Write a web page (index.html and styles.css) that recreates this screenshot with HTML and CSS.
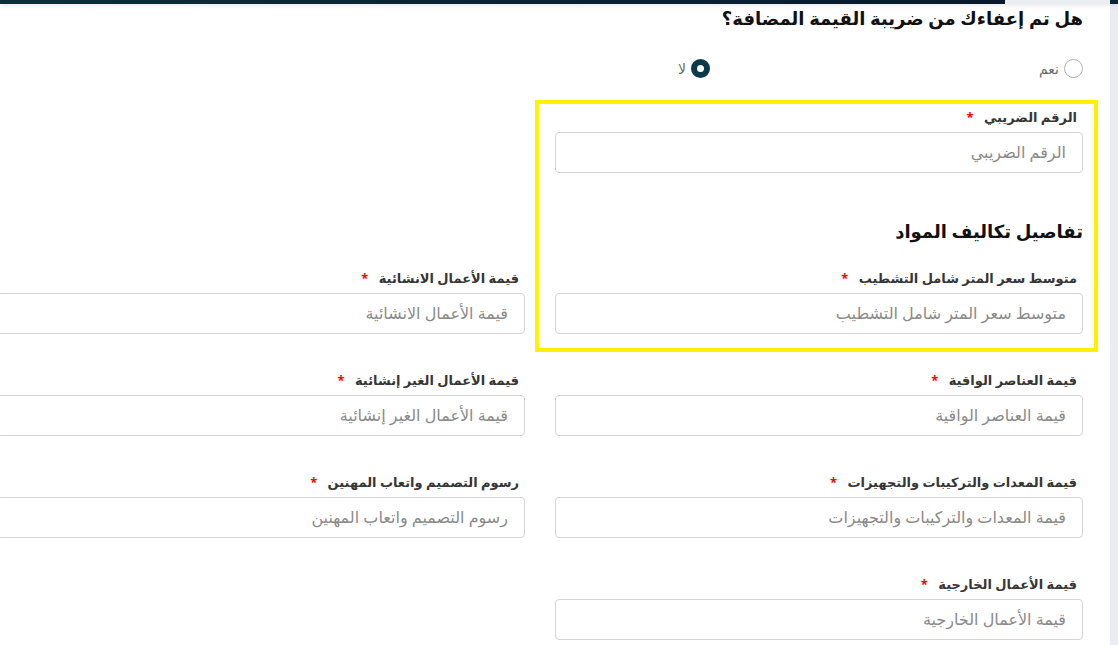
FILE: index.html
```html
<!DOCTYPE html>
<html lang="ar" dir="rtl">
<head>
<meta charset="utf-8">
<title>نموذج</title>
<link rel="stylesheet" href="styles.css">
</head>
<body>
<div class="topbar">
  <span class="bar-fill"></span>
  <span class="bar-rest"></span>
  <span class="bar-end"></span>
</div>
<div class="layout">
  <span class="side-strip"></span>
  <main class="main">
    <h2 class="question">هل تم إعفاءك من ضريبة القيمة المضافة؟</h2>
    <div class="radios">
      <label class="radio-opt"><span class="radio"></span><span class="radio-text">نعم</span></label>
      <label class="radio-opt"><span class="radio checked"></span><span class="radio-text">لا</span></label>
    </div>

    <div class="grid first">
      <div class="field">
        <div class="label">الرقم الضريبي <span class="req">*</span></div>
        <div class="input">الرقم الضريبي</div>
      </div>
    </div>

    <h3 class="section">تفاصيل تكاليف المواد</h3>

    <div class="grid">
      <div class="field">
        <div class="label">متوسط سعر المتر شامل التشطيب <span class="req">*</span></div>
        <div class="input">متوسط سعر المتر شامل التشطيب</div>
      </div>
      <div class="field">
        <div class="label">قيمة الأعمال الانشائية <span class="req">*</span></div>
        <div class="input">قيمة الأعمال الانشائية</div>
      </div>
      <div class="field">
        <div class="label">قيمة العناصر الواقية <span class="req">*</span></div>
        <div class="input">قيمة العناصر الواقية</div>
      </div>
      <div class="field">
        <div class="label">قيمة الأعمال الغير إنشائية <span class="req">*</span></div>
        <div class="input">قيمة الأعمال الغير إنشائية</div>
      </div>
      <div class="field">
        <div class="label">قيمة المعدات والتركيبات والتجهيزات <span class="req">*</span></div>
        <div class="input">قيمة المعدات والتركيبات والتجهيزات</div>
      </div>
      <div class="field">
        <div class="label">رسوم التصميم واتعاب المهنين <span class="req">*</span></div>
        <div class="input">رسوم التصميم واتعاب المهنين</div>
      </div>
      <div class="field">
        <div class="label">قيمة الأعمال الخارجية <span class="req">*</span></div>
        <div class="input">قيمة الأعمال الخارجية</div>
      </div>
    </div>

    <div class="highlight"></div>
  </main>
</div>
</body>
</html>
```

FILE: styles.css
```css
* { box-sizing: border-box; }

html, body {
  margin: 0;
  padding: 0;
  height: 100%;
  overflow: hidden;
  background: #ffffff;
}

body {
  font-family: "Noto Sans", "DejaVu Sans", sans-serif;
  color: #222;
  direction: rtl;
}

.topbar {
  direction: ltr;
  display: flex;
  height: 4px;
  position: relative;
  z-index: 2;
  box-shadow: 0 1px 5px rgba(0, 0, 0, 0.12);
}
.bar-fill {
  width: 1005px;
  background: linear-gradient(90deg, #0c2e3b 0%, #0a2235 50%, #071a2e 100%);
}
.bar-rest {
  width: 105px;
  background: #e9edf2;
}
.bar-end {
  flex: 1;
  background: #0b2233;
}

.layout {
  display: flex;
  height: 641px;
}

.side-strip {
  width: 8px;
  flex: none;
  background: #e9edf2;
}

.main {
  position: relative;
  width: 1110px;
  flex: none;
  overflow: hidden;
  padding-right: 12px;
  background: #fff;
}

.question {
  margin: 0;
  padding: 0 15px;
  font-size: 18px;
  font-weight: 700;
  line-height: 28px;
  color: #111;
  white-space: nowrap;
}

.radios {
  display: flex;
  margin-top: 26px;
  height: 20px;
}
.radio-opt {
  width: 373px;
  flex: none;
  display: flex;
  align-items: center;
  gap: 5px;
  padding-right: 15px;
}
.radio {
  width: 19px;
  height: 19px;
  border-radius: 50%;
  border: 1px solid #adb1b5;
  background: #fff;
  flex: none;
}
.radio.checked {
  border: 6px solid #0b3a4d;
  background: #fff;
}
.radio-text {
  font-size: 14px;
  color: #6b6b6b;
}

.grid {
  display: grid;
  grid-template-columns: 558px 558px;
  width: 1116px;
  row-gap: 36px;
}
.grid.first {
  margin-top: 29px;
}

.field {
  padding: 0 15px;
}

.label {
  height: 20px;
  line-height: 20px;
  margin-bottom: 5px;
  padding-right: 6px;
  font-size: 13px;
  font-weight: 700;
  color: #363636;
  white-space: nowrap;
}
.req {
  color: #ff0000;
  margin-right: 7px;
}

.input {
  height: 41px;
  line-height: 39px;
  border: 1px solid #d2d4d7;
  border-radius: 4px;
  padding: 0 16px;
  font-size: 16px;
  color: #8a8a8a;
  white-space: nowrap;
}

.section {
  margin: 43px 0 22px 0;
  padding: 0 15px;
  font-size: 18px;
  font-weight: 700;
  line-height: 30px;
  color: #111;
}

.highlight {
  position: absolute;
  top: 96px;
  right: 12px;
  width: 563px;
  height: 252px;
  border: 4px solid #fff200;
  pointer-events: none;
}
```
